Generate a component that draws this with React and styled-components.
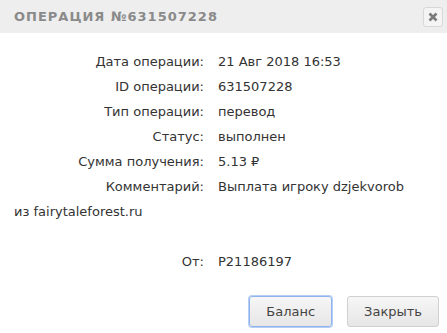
import React from "react";
import styled, { createGlobalStyle } from "styled-components";

const GlobalStyle = createGlobalStyle`
  html, body {
    margin: 0;
    padding: 0;
    background: #ffffff;
  }
`;

const rows = [
  { label: "Дата операции:", value: "21 Авг 2018 16:53" },
  { label: "ID операции:", value: "631507228" },
  { label: "Тип операции:", value: "перевод" },
  { label: "Статус:", value: "выполнен" },
  { label: "Сумма получения:", value: "5.13 ₽" },
  { label: "Комментарий:", value: "Выплата игроку dzjekvorob из fairytaleforest.ru" },
  { label: "", value: "" },
  { label: "От:", value: "P21186197" },
];

function App() {
  return (
    <>
      <GlobalStyle />
      <Dialog>
        <Header>
          <Title>Операция №631507228</Title>
          <CloseIcon aria-label="close">
            <svg width="10" height="10" viewBox="0 0 10 10">
              <path d="M1.5 1.5 L8.5 8.5 M8.5 1.5 L1.5 8.5" stroke="#7a7a7a" strokeWidth="2.6" strokeLinecap="butt" />
            </svg>
          </CloseIcon>
        </Header>
        <Body>
          {rows.map((r, i) => (
            <Row key={i}>
              <Label>{r.label}</Label>
              {r.value}
            </Row>
          ))}
        </Body>
        <Footer>
          <Button $focused>Баланс</Button>
          <Button>Закрыть</Button>
        </Footer>
      </Dialog>
    </>
  );
}

const Dialog = styled.div`
  width: 447px;
  height: 333px;
  background: #fff;
  font-family: "DejaVu Sans", sans-serif;
  color: #333;
`;

const Header = styled.div`
  height: 33px;
  background: #eeeeee;
  display: flex;
  align-items: center;
  justify-content: space-between;
  padding: 0 4px 0 14px;
  box-sizing: border-box;
`;

const Title = styled.h2`
  margin: 0;
  font-size: 13px;
  font-weight: bold;
  text-transform: uppercase;
  letter-spacing: 1px;
  color: #8a8a8a;
`;

const CloseIcon = styled.button`
  width: 20px;
  height: 20px;
  padding: 0;
  border: 1px solid #d8d8d8;
  border-radius: 3px;
  background: #f4f4f4;
  display: flex;
  align-items: center;
  justify-content: center;
  margin-top: 1px;
`;

const Body = styled.div`
  padding: 16px 24px 0 14px;
  font-size: 13px;
  line-height: 25px;
  min-height: 226px;
  box-sizing: border-box;
`;

const Row = styled.div`
  min-height: 25px;
`;

const Label = styled.span`
  display: inline-block;
  width: 190px;
  margin-right: 14px;
  text-align: right;
`;

const Footer = styled.div`
  display: flex;
  justify-content: flex-end;
  gap: 15px;
  padding: 22px 8px 0 0;
`;

const Button = styled.button`
  height: 31px;
  padding: 0 16px;
  font-family: "DejaVu Sans", sans-serif;
  font-size: 13px;
  color: #444;
  background: linear-gradient(#f6f6f6, #e6e6e6);
  border: 1px solid ${(p) => (p.$focused ? "#8db2ee" : "#d0d0d0")};
  box-shadow: ${(p) => (p.$focused ? "0 0 0 1px #b7cff5" : "none")};
  border-radius: 3px;
`;

export default App;
